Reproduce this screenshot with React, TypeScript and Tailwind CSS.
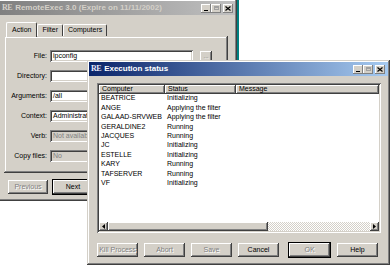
import React from "react";

const raised =
  "shadow-[inset_-1px_-1px_0_#404040,inset_1px_1px_0_#ffffff,inset_-2px_-2px_0_#808080,inset_2px_2px_0_#d4d0c8]";
const frame =
  "shadow-[inset_-1px_-1px_0_#404040,inset_1px_1px_0_#d4d0c8,inset_-2px_-2px_0_#808080,inset_2px_2px_0_#ffffff]";
const sunken =
  "shadow-[inset_1px_1px_0_#808080,inset_-1px_-1px_0_#ffffff,inset_2px_2px_0_#404040,inset_-2px_-2px_0_#d4d0c8]";
const thin = "shadow-[inset_-1px_-1px_0_#808080,inset_1px_1px_0_#ffffff]";
const disabledText = "text-[#808080] [text-shadow:1px_1px_0_#ffffff]";

const rows = [
  ["BEATRICE", "Initializing"],
  ["ANGE", "Applying the filter"],
  ["GALAAD-SRVWEB", "Applying the filter"],
  ["GERALDINE2", "Running"],
  ["JACQUES", "Running"],
  ["JC", "Initializing"],
  ["ESTELLE", "Initializing"],
  ["KARY", "Running"],
  ["TAFSERVER", "Running"],
  ["VF", "Initializing"],
];

function CaptionButtons() {
  return (
    <div className="flex items-center">
      <div className={`w-[10px] h-[9px] bg-[#d4d0c8] flex items-end justify-center pb-[2px] ${thin}`}>
        <div className="w-[4px] h-[1px] bg-black" />
      </div>
      <div className={`w-[10px] h-[9px] bg-[#d4d0c8] flex items-center justify-center ${thin}`}>
        <div className="w-[5px] h-[4px] border border-t-2 border-[#a0a0a0]" />
      </div>
      <div className={`ml-[2px] w-[10px] h-[9px] bg-[#d4d0c8] flex items-center justify-center ${thin}`}>
        <svg width="6" height="5" viewBox="0 0 6 5">
          <path d="M0.5 0.5 L5.5 4.5 M5.5 0.5 L0.5 4.5" stroke="#000" strokeWidth="1.2" />
        </svg>
      </div>
    </div>
  );
}

function RE({ dim }: { dim?: boolean }) {
  return (
    <span
      className={`font-['Liberation_Serif',serif] font-bold text-[8px] leading-none tracking-[-0.5px] ${
        dim ? "text-[#d4d0c8]" : "text-[#e8e8f8]"
      }`}
    >
      RE
    </span>
  );
}

function Btn({ label, disabled, def, className = "" }: { label: string; disabled?: boolean; def?: boolean; className?: string }) {
  return (
    <div
      className={`h-[14px] flex items-center justify-center bg-[#d4d0c8] text-[7px] ${
        def ? "outline outline-1 outline-black -outline-offset-0" : ""
      } ${raised} ${disabled ? disabledText : "text-black"} ${className}`}
    >
      {label}
    </div>
  );
}

function Field({ label, value, disabled, wide = true }: { label: string; value: string; disabled?: boolean; wide?: boolean }) {
  return (
    <div className="flex items-center h-[12px]">
      <div className="w-[46px] text-right pr-[3px] text-[7px] text-black">{label}</div>
      <div
        className={`h-[12px] ${wide ? "w-[143px]" : "w-[100px]"} flex items-center pl-[3px] text-[7px] ${sunken} ${
          disabled ? "bg-[#d4d0c8] text-[#808080]" : "bg-white text-black"
        }`}
      >
        {value}
      </div>
    </div>
  );
}

function BackWindow() {
  return (
    <div className={`absolute left-[-2px] top-[-1px] w-[239px] h-[202px] bg-[#d4d0c8] p-[2px] flex flex-col ${frame}`}>
      <div className="h-[14px] flex items-center gap-[3px] pl-[2px] pr-[2px] bg-[linear-gradient(90deg,#808080,#c0c0c0)]">
        <RE dim />
        <span className="text-[8px] font-bold text-[#d4d0c8] whitespace-nowrap">RemoteExec 3.0 (Expire on 11/11/2002)</span>
        <div className="ml-auto">
          <CaptionButtons />
        </div>
      </div>

      <div className="mt-[6px] pl-[4px] flex flex-col">
        <div className="flex items-end h-[15px] pl-[2px]">
          <div className="h-[15px] px-[5px] bg-[#d4d0c8] border-t border-l border-white border-r border-r-[#404040] rounded-t-[2px] text-[7px] flex items-center relative z-10 -mb-[1px]">
            Action
          </div>
          <div className="h-[12px] px-[4px] border-t border-l border-white border-r border-r-[#404040] rounded-t-[2px] text-[7px] flex items-center">
            Filter
          </div>
          <div className="h-[12px] px-[4px] border-t border-l border-white border-r border-r-[#404040] rounded-t-[2px] text-[7px] flex items-center">
            Computers
          </div>
        </div>
        <div className={`w-[224px] h-[137px] pt-[14px] flex flex-col gap-[8px] ${frame}`}>
          <div className="flex items-center">
            <Field label="File:" value="ipconfig" />
            <div className={`ml-[7px] w-[12px] h-[11px] bg-[#d4d0c8] ${raised} text-[6px] ${disabledText} flex items-center justify-center`}>
              ...
            </div>
          </div>
          <Field label="Directory:" value="" />
          <Field label="Arguments:" value="/all" />
          <Field label="Context:" value="Administrator" />
          <Field label="Verb:" value="Not available" disabled />
          <Field label="Copy files:" value="No" disabled />
        </div>
        <div className="mt-[7px] pl-[4px] flex gap-[5px]">
          <Btn label="Previous" disabled className="w-[40px]" />
          <Btn label="Next" def className="w-[40px]" />
        </div>
      </div>
    </div>
  );
}

function Arrow({ dir }: { dir: "l" | "r" }) {
  return (
    <div className={`w-[9px] h-[9px] bg-[#d4d0c8] flex items-center justify-center ${raised}`}>
      <svg width="3" height="5" viewBox="0 0 3 5">
        <path d={dir === "l" ? "M3 0 L0 2.5 L3 5 Z" : "M0 0 L3 2.5 L0 5 Z"} fill="#000" />
      </svg>
    </div>
  );
}

function FrontWindow() {
  return (
    <div className={`absolute left-[87px] top-[60px] w-[303px] h-[205px] bg-[#d4d0c8] p-[2px] flex flex-col ${frame}`}>
      <div className="h-[14px] flex items-center gap-[3px] pl-[2px] pr-[3px] bg-[linear-gradient(90deg,#0a246a,#a6caf0)]">
        <RE />
        <span className="text-[8px] font-bold text-white whitespace-nowrap">Execution status</span>
        <div className="ml-auto">
          <CaptionButtons />
        </div>
      </div>

      <div className={`mt-[7px] ml-[8px] w-[284px] h-[150px] bg-white p-[2px] flex flex-col ${sunken}`}>
        <div className="flex h-[9px] text-[7px] text-black">
          <div className={`w-[66px] px-[3px] flex items-center bg-[#d4d0c8] ${raised}`}>Computer</div>
          <div className={`w-[71px] px-[3px] flex items-center bg-[#d4d0c8] ${raised}`}>Status</div>
          <div className={`flex-1 px-[3px] flex items-center bg-[#d4d0c8] ${raised}`}>Message</div>
        </div>
        <div className="flex-1 flex flex-col text-[7px] text-black">
          {rows.map(([c, s]) => (
            <div key={c} className="flex h-[9.4px] items-center">
              <div className="w-[66px] px-[2px] whitespace-nowrap">{c}</div>
              <div className="w-[71px] px-[2px] whitespace-nowrap">{s}</div>
            </div>
          ))}
        </div>
        <div className="flex h-[9px]">
          <Arrow dir="l" />
          <div className={`w-[160px] bg-[#d4d0c8] ${raised}`} />
          <div className="flex-1 bg-[conic-gradient(#ffffff_25%,#d4d0c8_0_50%,#ffffff_0_75%,#d4d0c8_0)] bg-[length:2px_2px]" />
          <Arrow dir="r" />
        </div>
      </div>

      <div className="mt-[10px] ml-[8px] flex gap-[6px]">
        <Btn label="Kill Process" disabled className="w-[41px]" />
        <Btn label="Abort" disabled className="w-[41px]" />
        <Btn label="Save" disabled className="w-[41px]" />
        <Btn label="Cancel" className="w-[41px]" />
        <Btn label="OK" disabled def className="w-[41px] ml-[4px]" />
        <Btn label="Help" className="w-[41px] ml-[1px]" />
      </div>
    </div>
  );
}

export default function App() {
  return (
    <div className="relative w-[390px] h-[268px] bg-white overflow-hidden font-['Liberation_Sans',Arial,sans-serif]">
      <BackWindow />
      <div className="absolute left-[237px] top-0 w-[2px] h-[60px] bg-[#008080]" />
      <FrontWindow />
    </div>
  );
}
